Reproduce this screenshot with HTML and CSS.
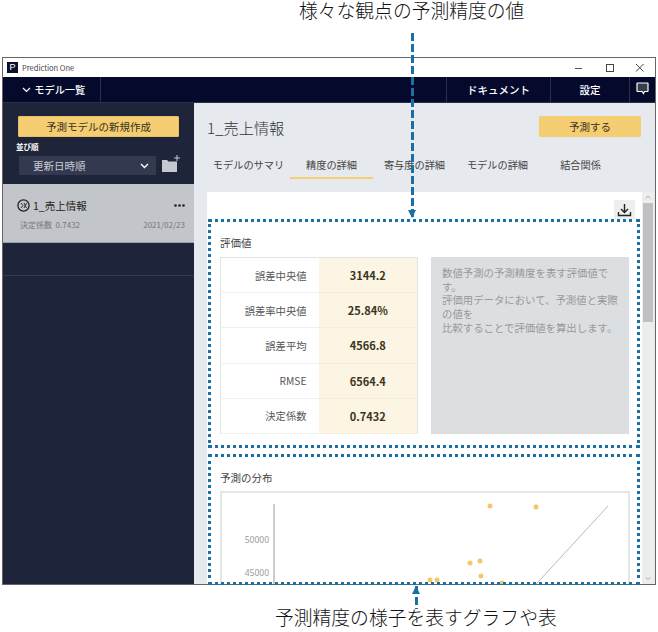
FILE: index.html
```html
<!DOCTYPE html>
<html lang="ja">
<head>
<meta charset="utf-8">
<title>Prediction One</title>
<link rel="stylesheet" href="styles.css">
</head>
<body>
<div class="stage">
  <p class="caption caption-top">様々な観点の予測精度の値</p>

  <div class="window">
    <div class="titlebar">
      <span class="app-logo">P</span>
      <span class="app-name">Prediction One</span>
      <span class="win-btns">
        <svg width="10" height="10" viewBox="0 0 10 10"><path d="M0 5.500h7" stroke="#555" fill="none"/></svg>
        <svg width="10" height="10" viewBox="0 0 10 10"><rect x="1.500" y="1.500" width="7" height="7" stroke="#444" fill="none"/></svg>
        <svg width="10" height="10" viewBox="0 0 10 10"><path d="M1 1l7.500 7.500M8.500 1L1 8.500" stroke="#444" fill="none"/></svg>
      </span>
    </div>

    <div class="navbar">
      <div class="nav-models">
        <svg width="9" height="6" viewBox="0 0 9 6"><path d="M1 1l3.500 3.500L8 1" stroke="#fff" stroke-width="1.200" fill="none"/></svg>
        モデル一覧
      </div>
      <div class="nav-spacer"></div>
      <div class="nav-item nav-doc">ドキュメント</div>
      <div class="nav-item nav-set">設定</div>
      <div class="nav-item nav-chat">
        <svg width="13" height="13" viewBox="0 0 13 13"><path d="M1.500 1h10a.5.5 0 0 1 .5.500V9a.5.5 0 0 1-.5.500H8.500l-1 2-1.500-2H1.500A.5.5 0 0 1 1 9V1.500a.5.5 0 0 1 .5-.500z" fill="#3a3d4c" stroke="#fff" stroke-width="1.200"/></svg>
      </div>
    </div>

    <div class="app-body">
      <aside class="sidebar">
        <button class="btn btn-new">予測モデルの新規作成</button>
        <div class="sort-label">並び順</div>
        <div class="sort-row">
          <div class="sort-select">
            <span>更新日時順</span>
            <svg width="9" height="6" viewBox="0 0 9 6"><path d="M1 1l3.500 3.500L8 1" stroke="#fff" stroke-width="1.400" fill="none"/></svg>
          </div>
          <svg class="folder" width="19" height="18" viewBox="0 0 19 18"><path d="M1 5h5l1.500 1.500H16V17H1z" fill="#c5c8cf"/><path d="M16 0v6M13 3h6" stroke="#c5c8cf" fill="none"/></svg>
        </div>
        <div class="model-item">
          <div class="model-top">
            <svg width="13" height="13" viewBox="0 0 13 13"><circle cx="6.500" cy="6.500" r="5.600" fill="none" stroke="#222" stroke-width="1.300"/><path d="M4 4l2 2.500-2 2.500M7 4l2.500 5M9.500 4L7 9" stroke="#222" stroke-width=".9" fill="none"/></svg>
            <span class="model-name">1_売上情報</span>
            <svg class="model-more" width="11" height="3" viewBox="0 0 11 3"><circle cx="1.500" cy="1.500" r="1.300"/><circle cx="5.500" cy="1.500" r="1.300"/><circle cx="9.500" cy="1.500" r="1.300"/></svg>
          </div>
          <div class="model-meta">
            <span>決定係数&nbsp; 0.7432</span>
            <span>2021/02/23</span>
          </div>
        </div>
        <div class="model-empty"></div>
      </aside>

      <main class="main">
        <div class="main-head">
          <h1 class="model-title">1_売上情報</h1>
          <button class="btn btn-predict">予測する</button>
        </div>
        <nav class="tabs">
          <div class="tab">モデルのサマリ</div>
          <div class="tab tab-active">精度の詳細</div>
          <div class="tab">寄与度の詳細</div>
          <div class="tab">モデルの詳細</div>
          <div class="tab">結合関係</div>
        </nav>

        <div class="content">
          <div class="panel">
            <div class="panel-tools">
              <span class="dl-btn">
                <svg width="15" height="14" viewBox="0 0 15 14"><path d="M7.500 1v8M4 6l3.500 3.500L11 6M1.500 9v3.500h12V9" fill="none" stroke="#222" stroke-width="1.400"/></svg>
              </span>
            </div>

            <section class="metrics">
              <h2 class="sec-title">評価値</h2>
              <div class="metrics-row">
                <table class="metric-table">
                  <tr><th>誤差中央値</th><td>3144.2</td></tr>
                  <tr><th>誤差率中央値</th><td>25.84%</td></tr>
                  <tr><th>誤差平均</th><td>4566.8</td></tr>
                  <tr><th>RMSE</th><td>6564.4</td></tr>
                  <tr><th>決定係数</th><td>0.7432</td></tr>
                </table>
                <div class="metric-desc">
                  数値予測の予測精度を表す評価値です。<br>
                  評価用データにおいて、予測値と実際の値を<br>
                  比較することで評価値を算出します。
                </div>
              </div>
            </section>

            <section class="dist">
              <h2 class="sec-title">予測の分布</h2>
              <div class="chart-box">
                <svg class="chart" width="405" height="200" viewBox="0 0 405 200">
                  <path d="M52 11V200" stroke="#9a9a9a" fill="none"/>
                  <path d="M386 13L306 100" stroke="#bbb" fill="none"/>
                  <g fill="#f5c76b">
                    <circle cx="268" cy="13" r="2.500"/>
                    <circle cx="314" cy="14" r="2.500"/>
                    <circle cx="248" cy="70" r="2.500"/>
                    <circle cx="258" cy="68" r="2.500"/>
                    <circle cx="259" cy="83" r="2.500"/>
                    <circle cx="208" cy="87" r="2.500"/>
                    <circle cx="215" cy="87" r="2.500"/>
                    <circle cx="280" cy="90" r="2.500"/>
                  </g>
                  <text x="47" y="50" text-anchor="end" class="tick">50000</text>
                  <text x="47" y="83" text-anchor="end" class="tick">45000</text>
                </svg>
              </div>
            </section>
          </div>
          <div class="scrollbar">
            <svg class="scroll-arrow" width="12" height="11" viewBox="0 0 12 11"><path d="M3.500 6.500L6 4l2.500 2.500" stroke="#aaa" fill="none"/></svg>
            <span class="scroll-thumb"></span>
            <svg class="scroll-arrow scroll-arrow-down" width="12" height="11" viewBox="0 0 12 11"><path d="M3.500 4L6 6.500 8.500 4" stroke="#aaa" fill="none"/></svg>
          </div>
        </div>
      </main>
    </div>
  </div>

  <p class="caption caption-bottom">予測精度の様子を表すグラフや表</p>

  <div class="callout callout-metrics"></div>
  <div class="callout callout-dist"></div>
  <div class="arrow arrow-down"></div>
  <div class="arrow arrow-up"></div>
</div>
</body>
</html>
```

FILE: styles.css
```css
* {box-sizing: border-box;}
html,body {margin: 0; padding: 0; background: #fff;}
body {font-family: "Noto Sans CJK JP","Noto Sans",sans-serif; color: #333;}
button {font-family: inherit; cursor: pointer;}

.stage {position: relative; width: 658px; height: 632px; padding: 0 2px;}

.caption {margin: 0; font-family: "Liberation Sans","Noto Sans CJK JP",sans-serif; font-size: 18.800px; font-weight: 300; color: #111; line-height: 23px; white-space: nowrap; position: relative; z-index: 2;}
.caption-top {height: 57px; padding: 0 0 0 297px;}
.caption-bottom {padding: 22px 0 0 273px;}

/* window */
.window {width: 654px; height: 528px; border: 1px solid #666; display: flex; flex-direction: column; overflow: hidden; background: #fff;}
.titlebar {height: 19px; flex: none; display: flex; align-items: center; padding-left: 4px; background: #fff;}
.app-logo {width: 11px; height: 11px; background: #0b1030; color: #fff; font: 9px/11px "Liberation Sans",sans-serif; text-align: center;}
.app-name {font-size: 7.500px; margin-left: 4px; color: #444;}
.win-btns {margin-left: auto; display: flex; gap: 20px; padding-right: 10px;}

.navbar {height: 26px; flex: none; display: flex; background: #050a2c; color: #fff; font-size: 10.500px; line-height: 25px; border-bottom: 1px solid #2b3048;}
.nav-models {width: 98px; padding-left: 19px; border-right: 1px solid #2b3048; font-size: 10.200px; font-weight: 500;}
.nav-models svg {margin-right: 1px; vertical-align: 1px;}
.nav-spacer {flex: 1;}
.nav-item {border-left: 1px solid #2b3048; text-align: center; font-weight: 500;}
.nav-doc {width: 104px;}
.nav-set {width: 79px;}
.nav-chat {width: 26px; padding-top: 1px;}

.app-body {flex: 1; display: flex; min-height: 0;}

/* sidebar */
.sidebar {width: 191px; flex: none; background: #1e2439; padding-top: 13px;}
.btn {display: block; height: 21px; padding: 0; border: 1px solid #e8bf62; background: #f5cd72; color: #3a3320; font-size: 10.500px; line-height: 18px; border-radius: 1px;}
.btn-new {width: 161px; margin-left: 15px;}
.sort-label {font-size: 7.500px; font-weight: 700; color: #fff; line-height: 10px; margin: 5px 0 0 13px;}
.sort-row {display: flex; align-items: center; margin: 4px 0 0 16px;}
.sort-select {width: 137px; height: 19px; background: #33394f; color: #c9ccd3; font-size: 10.500px; line-height: 19px; padding: 0 7px 0 14px; display: flex; justify-content: space-between; align-items: center;}
.folder {margin-left: 5px; margin-top: -3px;}
.model-item {height: 59px; margin-top: 9px; background: #c2c5c9; border-bottom: 1px solid #9ea1a8; padding: 13px 9px 0 14px;}
.model-top {display: flex; align-items: center; height: 16px; color: #222;}
.model-name {font-size: 10.500px; margin-left: 3px;}
.model-more {margin-left: auto; fill: #222;}
.model-meta {display: flex; justify-content: space-between; font-size: 8px; color: #777; margin: 6px 0 0 3px; line-height: 12px;}
.model-empty {height: 33px; border-bottom: 1px solid #33394f;}

/* main */
.main {flex: 1; background: #e6e9ee; padding: 13px 0 0 13px; min-width: 0; display: flex; flex-direction: column;}
.main-head {display: flex; justify-content: space-between; align-items: center; height: 21px; padding-right: 14px;}
.model-title {margin: 0; font-size: 15.200px; font-weight: 300; color: #333;}
.btn-predict {width: 102px; border-color: #f5cd72;}
.tabs {display: flex; margin-top: 15px; height: 27px;}
.tab {width: 83px; text-align: center; font-size: 10.200px; line-height: 25px; color: #444; height: 27px; flex: none;}
.tab-active {border-bottom: 2px solid #f5cd72;}

.content {flex: 1; display: flex; margin-top: 13px; min-height: 0;}
.panel {width: 435px; flex: none; background: #fff; overflow: hidden;}
.panel-tools {display: flex; justify-content: flex-end; padding: 8px 7px 0 0; height: 27px;}
.dl-btn {width: 21px; height: 19px; background: #eee; display: flex; align-items: center; justify-content: center;}

.sec-title {margin: 0; font-size: 10.500px; font-weight: 400; color: #444; line-height: 14px;}
.metrics {padding: 17px 13px 0;}
.metrics-row {display: flex; gap: 13px; margin-top: 7px;}
.metric-table {width: 198px; height: 177px; border-collapse: collapse; border: 1px solid #e2e2e2; flex: none; table-layout: fixed;}
.metric-table th {width: 98px; font-size: 10.300px; font-weight: 400; color: #555; text-align: right; padding: 0 12px 0 0; border-bottom: 1px solid #efefef;}
.metric-table td {background: #fcf5e4; font-size: 11px; font-weight: 700; color: #3a3320; text-align: center; border-bottom: 1px solid #f5eedd; padding: 0;}
.metric-desc {width: 199px; height: 177px; background: #dcdfe2; color: #999; font-size: 10.400px; line-height: 13.700px; padding: 9px 11px;}

.dist {padding: 37px 13px 0;}
.chart-box {margin-top: 6px; border: 2px solid #e6e6e6; width: 410px; height: 200px;}
.chart {display: block;}
.tick {font: 8.500px "Noto Sans",sans-serif; fill: #999;}

.scrollbar {width: 12px; background: #eceded; display: flex; flex-direction: column;}
.scroll-arrow {flex: none; display: block;}
.scroll-thumb {height: 119px; flex: none; background: #c0c0c3; margin: 0 1px;}
.scroll-arrow-down {margin-top: auto;}

/* blue call-outs laid over the screenshot */
.callout {position: absolute; left: 208px; width: 432px; border: 3px dotted #1a6fa5; z-index: 3;}
.callout-metrics {top: 219px; height: 229px;}
.callout-dist {top: 454px; height: 131px;}
.arrow {position: absolute; width: 3px; z-index: 3; background: repeating-linear-gradient(to bottom,#1a6fa5 0 8px,transparent 8px 11px);}
.arrow::after {content: ""; position: absolute; left: -3px; border-left: 4.500px solid transparent; border-right: 4.500px solid transparent;}
.arrow-down {left: 411px; top: 33px; height: 184px;}
.arrow-down::after {bottom: -1px; border-top: 8px solid #1a6fa5;}
.arrow-up {left: 415px; top: 586px; height: 23px;}
.arrow-up::after {top: 0; border-bottom: 8px solid #1a6fa5;}
```
